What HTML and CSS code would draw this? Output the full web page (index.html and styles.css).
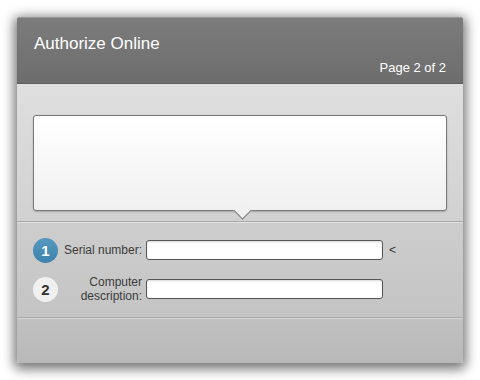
FILE: index.html
```html
<!DOCTYPE html>
<html lang="en">
<head>
  <meta charset="UTF-8">
  <title>Authorize Online</title>
  <link rel="stylesheet" href="styles.css">
</head>
<body>
  <div class="dialog">
    <div class="header">
      <h1>Authorize Online</h1>
      <div class="page">Page 2 of 2</div>
    </div>

    <div class="message-area">
      <div class="bubble"></div>
    </div>

    <div class="form">
      <div class="row">
        <span class="step active">1</span>
        <label for="serial">Serial number:</label>
        <input type="text" id="serial">
        <span class="caret">&lt;</span>
      </div>
      <div class="row">
        <span class="step">2</span>
        <label for="desc">Computer description:</label>
        <input type="text" id="desc">
      </div>
    </div>

    <div class="footer"></div>
  </div>
</body>
</html>
```

FILE: styles.css
```css
  body {
    margin: 0;
    padding: 17px;
    background: #fff;
    font-family: 'Liberation Sans', Arial, sans-serif;
  }

  .dialog {
    width: 446px;
    height: 346px;
    display: flex;
    flex-direction: column;
    border-radius: 2px;
    overflow: hidden;
    box-shadow: 0 3px 12px 3px rgba(0, 0, 0, 0.55);
  }

  .header {
    height: 67px;
    box-sizing: border-box;
    padding: 16px 17px 0;
    background: linear-gradient(#7c7c7c, #6d6d6d);
    border-top: 1px solid #9a9a9a;
    border-bottom: 1px solid #5e5e5e;
    color: #fff;
  }

  h1 {
    margin: 0;
    font-size: 17px;
    font-weight: normal;
    line-height: 20px;
  }

  .page {
    margin-top: 6px;
    text-align: right;
    font-size: 13px;
    line-height: 15px;
  }

  .message-area {
    height: 138px;
    box-sizing: border-box;
    padding: 31px 16px 0;
    background: linear-gradient(#dfdfdf, #d1d1d1);
    border-bottom: 1px solid #a9a9a9;
  }

  .bubble {
    position: relative;
    height: 96px;
    box-sizing: border-box;
    border: 1px solid #777;
    border-radius: 3px;
    background: linear-gradient(#ffffff, #f0f0f0);
    box-shadow: 0 1px 2px rgba(0, 0, 0, 0.2);
  }

  .bubble::after {
    content: "";
    position: absolute;
    left: 202px;
    bottom: -7px;
    width: 12px;
    height: 12px;
    background: #f0f0f0;
    border-right: 1px solid #777;
    border-bottom: 1px solid #777;
    transform: rotate(45deg);
  }

  .form {
    height: 96px;
    box-sizing: border-box;
    padding: 17px 16px 0;
    display: flex;
    flex-direction: column;
    gap: 19px;
    background: linear-gradient(#cdcdcd, #c4c4c4);
    border-top: 1px solid #e2e2e2;
    border-bottom: 1px solid #a9a9a9;
  }

  .row {
    display: flex;
    align-items: center;
    height: 20px;
  }

  .step {
    width: 25px;
    height: 25px;
    border-radius: 50%;
    flex: none;
    display: flex;
    align-items: center;
    justify-content: center;
    font-size: 15px;
    font-weight: bold;
    color: #333;
    background: #f0f0f0;
  }

  .step.active {
    color: #fff;
    background: linear-gradient(#5598c0, #3f82ab);
  }

  label {
    width: 80px;
    margin: 0 4px;
    text-align: right;
    font-size: 12px;
    line-height: 14px;
    color: #3c3c3c;
  }

  input {
    width: 237px;
    height: 20px;
    box-sizing: border-box;
    margin: 0;
    border: 1px solid #555;
    border-radius: 3px;
    background: #fff;
    box-shadow: inset 0 1px 2px rgba(0, 0, 0, 0.15);
  }

  .caret {
    margin-left: 6px;
    font-size: 12px;
    color: #333;
  }

  .footer {
    flex: 1;
    background: linear-gradient(#c0c0c0, #b9b9b9);
    border-top: 1px solid #d6d6d6;
  }
```
